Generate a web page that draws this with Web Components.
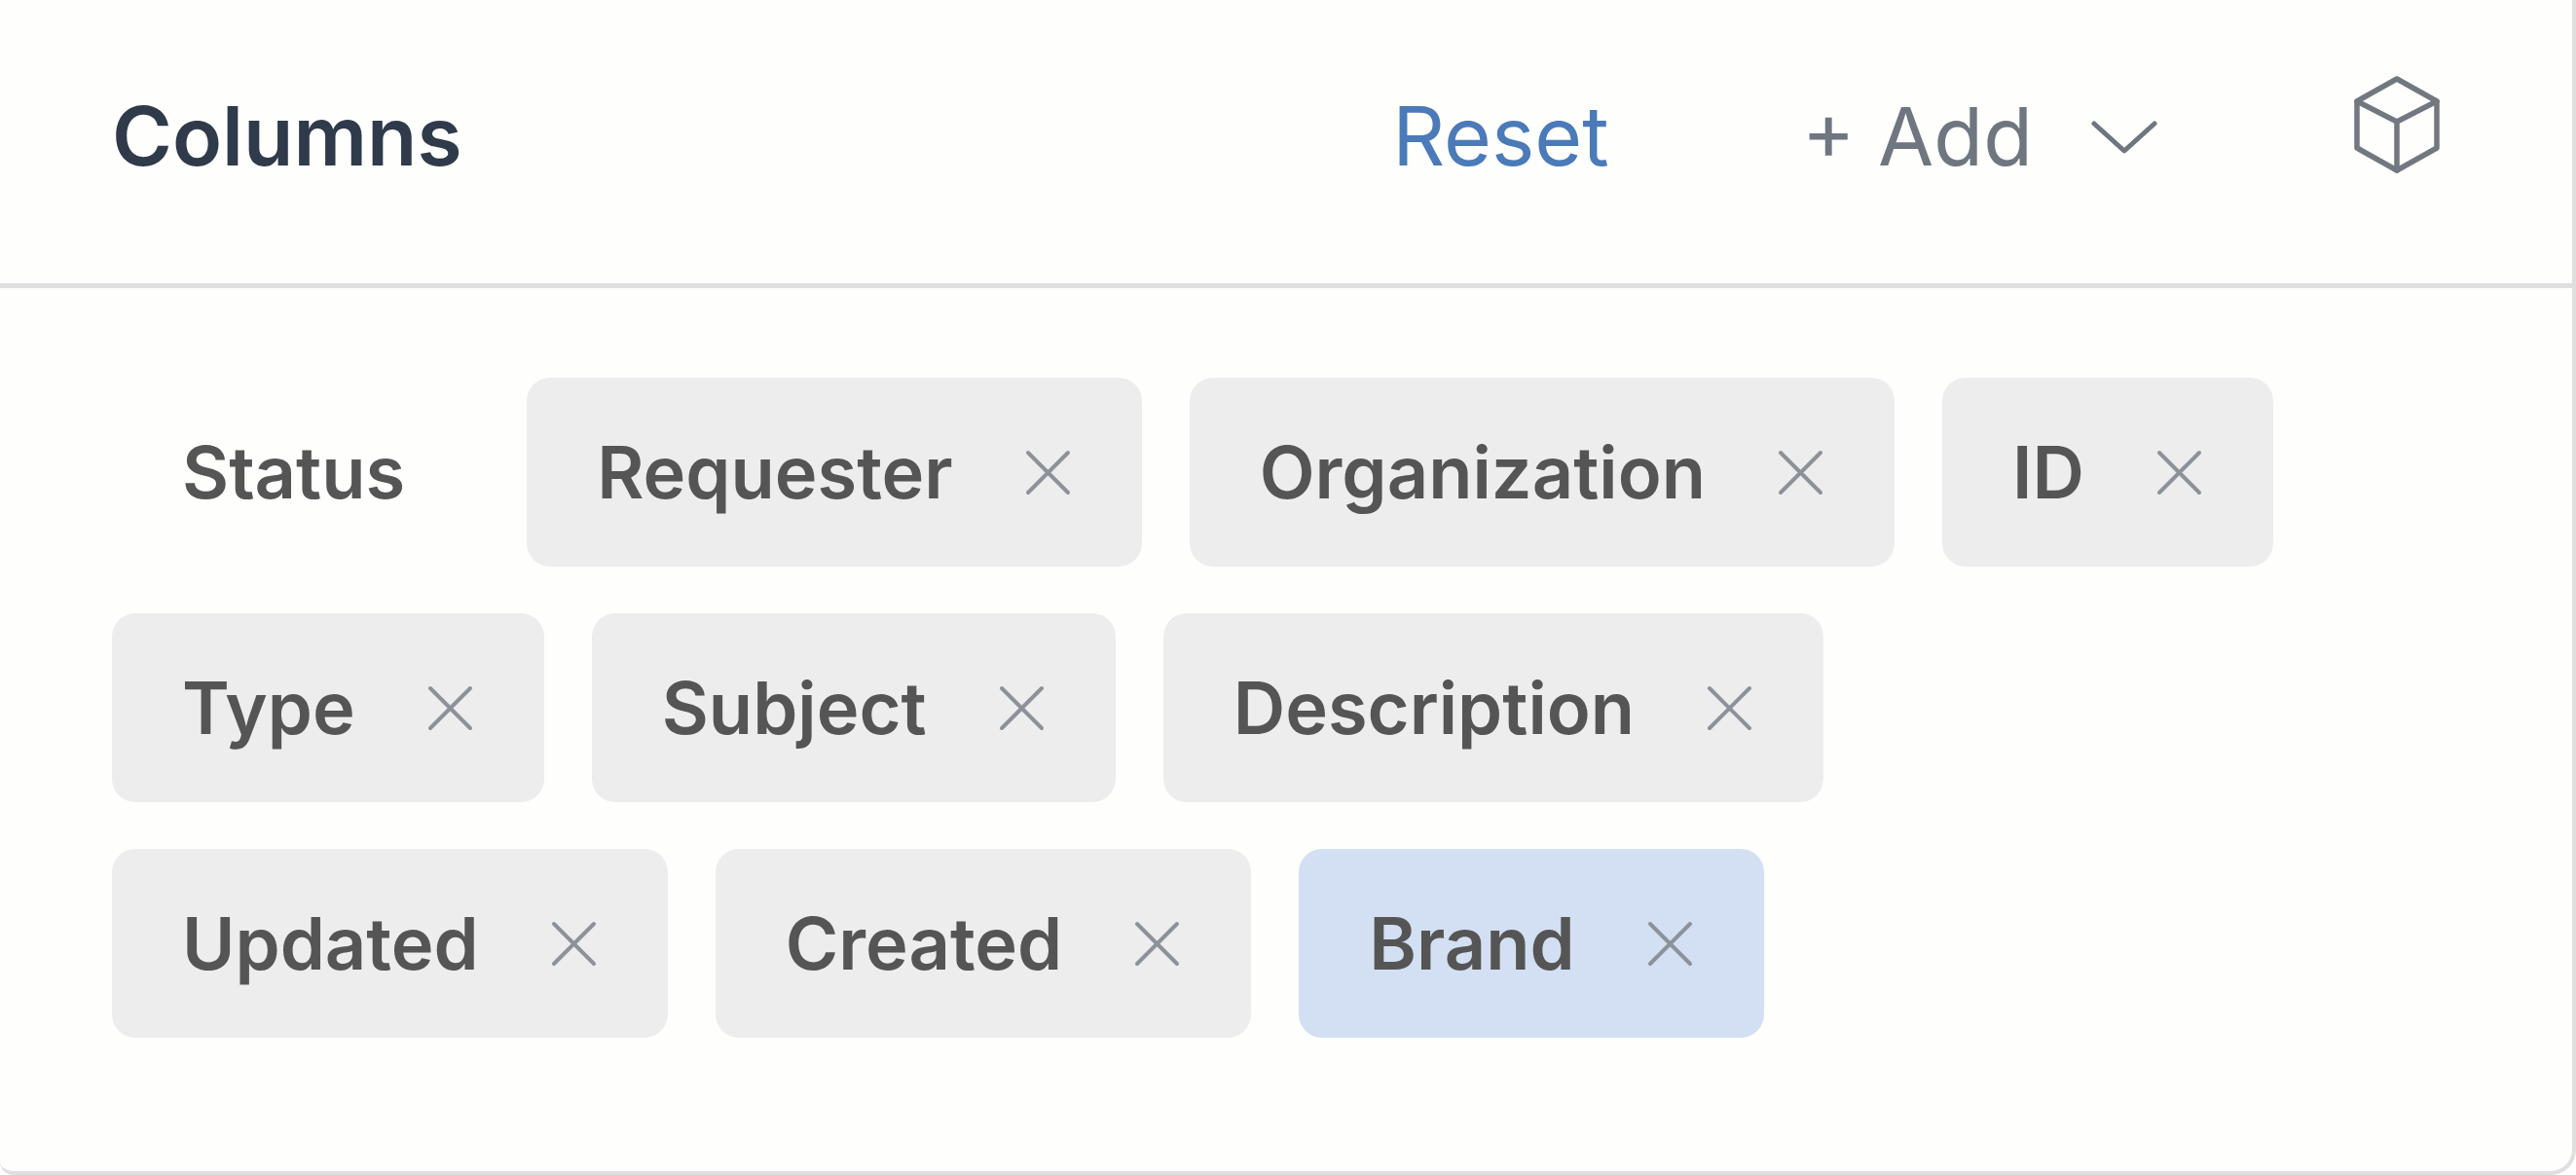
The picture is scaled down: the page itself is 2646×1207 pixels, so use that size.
<!DOCTYPE html>
<html>
<head>
<meta charset="utf-8">
<style>
  html, body { margin: 0; padding: 0; background: #fff; }
  body { font-family: Inter, "Liberation Sans", sans-serif; }
</style>
</head>
<body>
<columns-card>
  <span slot="title">Columns</span>
  <column-chip fixed>Status</column-chip>
  <column-chip>Requester</column-chip>
  <column-chip>Organization</column-chip>
  <column-chip>ID</column-chip>
  <column-chip>Type</column-chip>
  <column-chip>Subject</column-chip>
  <column-chip>Description</column-chip>
  <column-chip>Updated</column-chip>
  <column-chip>Created</column-chip>
  <column-chip active>Brand</column-chip>
</columns-card>

<script>
class ColumnChip extends HTMLElement {
  constructor() {
    super();
    this.attachShadow({ mode: 'open' });
    this.shadowRoot.innerHTML = `
      <style>
        :host {
          display: inline-flex;
          align-items: center;
          box-sizing: border-box;
          height: 194px;
          padding: 0 73px 0 72px;
          gap: 74px;
          background: #ededed;
          border-radius: 24px;
          color: #555555;
          font-size: 74px;
          font-weight: 600;
          white-space: nowrap;
        }
        :host([fixed]) { background: transparent; padding-right: 76px; }
        :host([active]) { background: #d3e0f3; }
        :host([fixed]) svg { display: none; }
        svg { width: 47px; height: 47px; display: block; }
      </style>
      <slot></slot>
      <svg viewBox="0 0 47 47" fill="none" stroke="#8d929a" stroke-width="4" stroke-linecap="round">
        <path d="M3 3 L44 44 M44 3 L3 44"/>
      </svg>
    `;
  }
}
customElements.define('column-chip', ColumnChip);

class ColumnsCard extends HTMLElement {
  constructor() {
    super();
    this.attachShadow({ mode: 'open' });
    this.shadowRoot.innerHTML = `
      <style>
        :host {
          display: block;
          box-sizing: border-box;
          width: 2646px;
          height: 1207px;
          background: #fefefd;
          border-right: 4px solid #dfdfe0;
          border-bottom: 4px solid #dfdfe0;
          border-bottom-right-radius: 26px;
          border-bottom-left-radius: 14px;
        }
        header {
          display: flex;
          align-items: center;
          box-sizing: border-box;
          height: 296px;
          padding: 0 136px 12px 115px;
          border-bottom: 5px solid #dfdfe0;
        }
        .title {
          flex: 1;
          font-size: 84px;
          font-weight: 600;
          color: #2f3a4a;
        }
        .reset {
          font-size: 84px;
          color: #4a7ab8;
          margin-right: 198px;
        }
        .add {
          display: flex;
          align-items: center;
          font-size: 83px;
          color: #6f7680;
          margin-right: 202px;
        }
        .add svg { width: 68px; height: 35px; margin-left: 60px; margin-top: 3px; }
        .cube { width: 88px; height: 100px; margin-top: -23px; flex: none; }
        .list {
          display: flex;
          flex-wrap: wrap;
          gap: 48px 49px;
          padding: 92px 206px 0 115px;
        }
      </style>
      <header>
        <div class="title"><slot name="title"></slot></div>
        <div class="reset">Reset</div>
        <div class="add">+ Add
          <svg viewBox="0 0 68 35" fill="none" stroke="#6f7680" stroke-width="5" stroke-linecap="round" stroke-linejoin="round">
            <path d="M3 3 L34 31 L65 3"/>
          </svg>
        </div>
        <svg class="cube" viewBox="0 0 88 100" fill="none" stroke="#717880" stroke-width="5.5" stroke-linejoin="round" stroke-linecap="round">
          <path d="M44 3 L85 26 V74 L44 97 L3 74 V26 Z"/>
          <path d="M3 26 L44 47 L85 26 M44 47 V97"/>
        </svg>
      </header>
      <div class="list"><slot></slot></div>
    `;
  }
}
customElements.define('columns-card', ColumnsCard);
</script>
</body>
</html>
